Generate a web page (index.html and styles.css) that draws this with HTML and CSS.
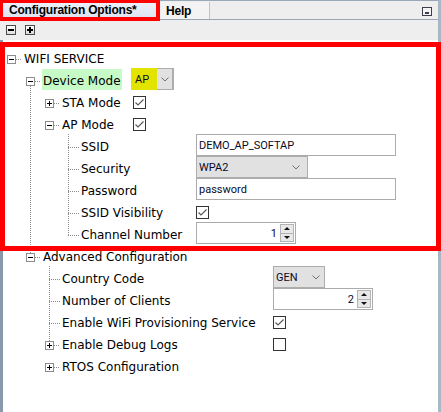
FILE: index.html
```html
<!DOCTYPE html>
<html>
<head>
<meta charset="utf-8">
<title>Configuration Options</title>
<link rel="stylesheet" href="styles.css">
</head>
<body>
<div class="app">
  <div class="tabbar">
    <div class="tab tab-active">Configuration Options*</div>
    <div class="tab tab-help">Help</div>
    <div class="tabfill"><span class="min-icon"></span></div>
  </div>
  <div class="toolbar">
    <span class="tbtn tminus"></span>
    <span class="tbtn tplus"></span>
  </div>
  <div class="tree">
    <div class="row">
      <span class="cell c-exp"><i class="box minus"></i></span>
      <span class="name">WIFI SERVICE</span>
    </div>
    <div class="row">
      <span class="cell"></span>
      <span class="cell c-exp-down"><i class="box minus"></i></span>
      <span class="name n1"><span class="hl">Device Mode</span></span>
      <span class="select sel-dev"><span class="stxt yellow">AP</span><span class="sarr"><svg width="8" height="5" viewBox="0 0 8 5"><polyline points="0.5,0.5 4,4 7.5,0.5" fill="none" stroke="#707070" stroke-width="1"/></svg></span></span>
    </div>
    <div class="row">
      <span class="cell"></span>
      <span class="cell c-v"></span>
      <span class="cell c-exp"><i class="box plus"></i></span>
      <span class="name n2">STA Mode</span>
      <span class="check on"><svg width="13" height="13" viewBox="0 0 13 13"><rect x="0.5" y="0.5" width="12" height="12" fill="#fff" stroke="#333"/><polyline points="2.5,6.5 5,9 10.5,3.5" fill="none" stroke="#555" stroke-width="1.1"/></svg></span>
    </div>
    <div class="row">
      <span class="cell"></span>
      <span class="cell c-v"></span>
      <span class="cell c-exp"><i class="box minus"></i></span>
      <span class="name n2">AP Mode</span>
      <span class="check on"><svg width="13" height="13" viewBox="0 0 13 13"><rect x="0.5" y="0.5" width="12" height="12" fill="#fff" stroke="#333"/><polyline points="2.5,6.5 5,9 10.5,3.5" fill="none" stroke="#555" stroke-width="1.1"/></svg></span>
    </div>
    <div class="row">
      <span class="cell"></span>
      <span class="cell c-v"></span>
      <span class="cell"></span>
      <span class="cell c-leaf"></span>
      <span class="name n3">SSID</span>
      <span class="input w200">DEMO_AP_SOFTAP</span>
    </div>
    <div class="row">
      <span class="cell"></span>
      <span class="cell c-v"></span>
      <span class="cell"></span>
      <span class="cell c-leaf"></span>
      <span class="name n3">Security</span>
      <span class="select sel-sec"><span class="stxt">WPA2</span><span class="sarr"><svg width="8" height="5" viewBox="0 0 8 5"><polyline points="0.5,0.5 4,4 7.5,0.5" fill="none" stroke="#707070" stroke-width="1"/></svg></span></span>
    </div>
    <div class="row">
      <span class="cell"></span>
      <span class="cell c-v"></span>
      <span class="cell"></span>
      <span class="cell c-leaf"></span>
      <span class="name n3">Password</span>
      <span class="input w200">password</span>
    </div>
    <div class="row">
      <span class="cell"></span>
      <span class="cell c-v"></span>
      <span class="cell"></span>
      <span class="cell c-leaf"></span>
      <span class="name n3">SSID Visibility</span>
      <span class="check on"><svg width="13" height="13" viewBox="0 0 13 13"><rect x="0.5" y="0.5" width="12" height="12" fill="#fff" stroke="#333"/><polyline points="2.5,6.5 5,9 10.5,3.5" fill="none" stroke="#555" stroke-width="1.1"/></svg></span>
    </div>
    <div class="row">
      <span class="cell"></span>
      <span class="cell c-v"></span>
      <span class="cell"></span>
      <span class="cell c-last"></span>
      <span class="name n3">Channel Number</span>
      <span class="spin"><span class="snum">1</span><span class="sbtns"><span class="sbtn"><i class="tri-up"></i></span><span class="sbtn"><i class="tri-down"></i></span></span></span>
    </div>
    <div class="row">
      <span class="cell"></span>
      <span class="cell c-exp-up"><i class="box minus"></i></span>
      <span class="name">Advanced Configuration</span>
    </div>
    <div class="row">
      <span class="cell"></span>
      <span class="cell"></span>
      <span class="cell c-leaf"></span>
      <span class="name n4">Country Code</span>
      <span class="select sel-cc"><span class="stxt">GEN</span><span class="sarr"><svg width="8" height="5" viewBox="0 0 8 5"><polyline points="0.5,0.5 4,4 7.5,0.5" fill="none" stroke="#707070" stroke-width="1"/></svg></span></span>
    </div>
    <div class="row">
      <span class="cell"></span>
      <span class="cell"></span>
      <span class="cell c-leaf"></span>
      <span class="name n4">Number of Clients</span>
      <span class="spin"><span class="snum">2</span><span class="sbtns"><span class="sbtn"><i class="tri-up"></i></span><span class="sbtn"><i class="tri-down"></i></span></span></span>
    </div>
    <div class="row">
      <span class="cell"></span>
      <span class="cell"></span>
      <span class="cell c-leaf"></span>
      <span class="name n4">Enable WiFi Provisioning Service</span>
      <span class="check on"><svg width="13" height="13" viewBox="0 0 13 13"><rect x="0.5" y="0.5" width="12" height="12" fill="#fff" stroke="#333"/><polyline points="2.5,6.5 5,9 10.5,3.5" fill="none" stroke="#555" stroke-width="1.1"/></svg></span>
    </div>
    <div class="row">
      <span class="cell"></span>
      <span class="cell"></span>
      <span class="cell c-exp-up"><i class="box plus"></i></span>
      <span class="name n4">Enable Debug Logs</span>
      <span class="check"><svg width="13" height="13" viewBox="0 0 13 13"><rect x="0.5" y="0.5" width="12" height="12" fill="#fff" stroke="#333"/></svg></span>
    </div>
    <div class="row">
      <span class="cell"></span>
      <span class="cell"></span>
      <span class="cell c-exp"><i class="box plus"></i></span>
      <span class="name">RTOS Configuration</span>
    </div>
  </div>
  <div class="mark mark-tab"></div>
  <div class="mark mark-box"></div>
</div>
</body>
</html>
```

FILE: styles.css
```css
* { box-sizing: border-box; }
html, body { margin: 0; padding: 0; }
body {
  width: 441px;
  height: 412px;
  overflow: hidden;
  background: #ffffff;
  font-family: "DejaVu Sans", Verdana, sans-serif;
  font-size: 12px;
  color: #000;
  --dot: #8c8c8c;
  --dv: repeating-linear-gradient(180deg, var(--dot) 0 1px, transparent 1px 2px);
  --dh: repeating-linear-gradient(90deg, var(--dot) 0 1px, transparent 1px 2px);
}

.app {
  position: relative;
  width: 441px;
  height: 412px;
  border-right: 3px solid #a9b6c4;
}

/* tab bar */
.tabbar {
  display: flex;
  height: 20px;
  background: #eeeeee;
  border-top: 1px solid #98a8b8;
  border-bottom: 1px solid #98a8b8;
}
.tab {
  font-family: "Liberation Sans", Arial, sans-serif;
  font-weight: bold;
  font-size: 12px;
  line-height: 18px;
  letter-spacing: -0.2px;
  color: #000;
  white-space: nowrap;
}
.tab-active {
  width: 160px;
  padding-left: 9px;
  background: linear-gradient(#eef1fa, #dce2f2);
}
.tab-help {
  width: 50px;
  padding-left: 6px;
  background: #f3f3f3;
  border-right: 1px solid #c4c4c4;
  margin-top: 1px;
}
.tabfill {
  flex: 1;
  display: flex;
  justify-content: flex-end;
  padding-right: 6px;
}
.min-icon {
  width: 10px;
  height: 9px;
  margin-top: 6px;
  border: 1px solid #3d3d4d;
  background:
    linear-gradient(#3d3d4d, #3d3d4d) 2px 4px / 4px 2px no-repeat,
    #f4f4f4;
}

/* toolbar */
.toolbar {
  display: flex;
  gap: 9px;
  height: 20px;
  padding: 5px 0 0 6px;
  background: #eeeeee;
}
.tbtn {
  width: 10px;
  height: 10px;
  border: 1px solid #4a4a4a;
  background: linear-gradient(#ffffff, #dcdcdc);
}
.tminus {
  background:
    linear-gradient(#000, #000) center / 6px 2px no-repeat,
    linear-gradient(#ffffff, #dcdcdc);
}
.tplus {
  background:
    linear-gradient(#000, #000) center / 6px 2px no-repeat,
    linear-gradient(#000, #000) center / 2px 6px no-repeat,
    linear-gradient(#ffffff, #dcdcdc);
}

/* tree */
.tree {
  height: 372px;
  padding-top: 6px;
  border-left: 3px solid #8a99aa;
  background: #fff;
}
.row {
  display: flex;
  align-items: flex-start;
  height: 22px;
  white-space: nowrap;
}
.cell {
  flex: none;
  width: 19px;
  height: 22px;
}
.c-v { background: var(--dv) 8px 0 / 1px 22px no-repeat; }
.c-leaf {
  background:
    var(--dv) 8px 0 / 1px 22px no-repeat,
    var(--dh) 8px 13px / 11px 1px no-repeat;
}
.c-last {
  background:
    var(--dv) 8px 0 / 1px 13px no-repeat,
    var(--dh) 8px 13px / 11px 1px no-repeat;
}
.c-exp { background: var(--dh) 13px 13px / 6px 1px no-repeat; }
.c-exp-down {
  background:
    var(--dh) 13px 13px / 6px 1px no-repeat,
    var(--dv) 8px 18px / 1px 4px no-repeat;
}
.c-exp-up {
  background:
    var(--dh) 13px 13px / 6px 1px no-repeat,
    var(--dv) 8px 0 / 1px 9px no-repeat;
}
.box {
  display: block;
  width: 9px;
  height: 9px;
  margin: 9px 0 0 4px;
  border: 1px solid #8c8c8c;
}
.box.minus {
  background: linear-gradient(#000, #000) center / 5px 1px no-repeat, #fff;
}
.box.plus {
  background:
    linear-gradient(#000, #000) center / 5px 1px no-repeat,
    linear-gradient(#000, #000) center / 1px 5px no-repeat,
    #fff;
}

.name {
  flex: none;
  margin-left: 2px;
  padding-top: 4px;
  line-height: 18px;
}
.n1 { width: 88px; }
.n2 { width: 71px; }
.n3 { width: 115px; }
.n4 { width: 211px; }
.hl {
  display: inline-block;
  margin: -3px 0 0 -1px;
  padding: 3px 1px 0;
  line-height: 18px;
  background: #c6fac6;
}

/* editors */
.select, .input, .spin {
  flex: none;
  display: flex;
  height: 22px;
  font-family: Roboto, "Liberation Sans", sans-serif;
  font-size: 11px;
  color: #0a0a28;
}
.select {
  border: 1px solid #adadad;
  background: #e1e1e1;
}
.stxt {
  flex: 1;
  padding: 1px 0 0 2px;
  line-height: 19px;
}
.sarr {
  width: 17px;
  display: flex;
  align-items: center;
  justify-content: center;
}
.sel-dev { width: 43px; border-left: none; border-top: none; border-bottom: none; background: transparent; }
.sel-dev .stxt {
  flex: none;
  width: 26px;
  padding-left: 4px;
  padding-top: 2px;
  background: #e3e300;
}
.sel-dev .sarr {
  border: 1px solid #adadad;
  border-left: none;
  background: #e1e1e1;
}
.sel-sec { width: 112px; }
.sel-sec .sarr { width: 22px; }
.sel-cc { width: 52px; }

.input {
  border: 1px solid #ababab;
  background: #fff;
  padding: 1px 0 0 2px;
  line-height: 19px;
}
.w200 { width: 200px; }

.spin {
  width: 100px;
  border: 1px solid #ababab;
  background: #fff;
}
.snum {
  flex: 1;
  text-align: right;
  padding: 1px 3px 0 0;
  line-height: 19px;
}
.sbtns {
  width: 15px;
  display: flex;
  flex-direction: column;
  padding: 1px 1px 1px 0;
}
.sbtn {
  flex: 1;
  display: flex;
  align-items: center;
  justify-content: center;
  border: 1px solid #b4b4b4;
  background: #e8e8e8;
}
.sbtn + .sbtn { border-top: none; }
.tri-up, .tri-down {
  width: 0;
  height: 0;
  border-left: 3px solid transparent;
  border-right: 3px solid transparent;
}
.tri-up { border-bottom: 3px solid #111; }
.tri-down { border-top: 3px solid #111; }

.check {
  flex: none;
  display: block;
  width: 13px;
  height: 13px;
  margin-top: 6px;
}
.check svg { display: block; }

/* red annotation marks */
.mark {
  position: absolute;
  border: solid #ff0000;
  pointer-events: none;
}
.mark-tab {
  left: 0;
  top: 0;
  width: 160px;
  height: 21px;
  border-width: 3px 4px 4px 3px;
}
.mark-box {
  left: 0;
  top: 42px;
  width: 441px;
  height: 209px;
  border-width: 5px;
}
```
